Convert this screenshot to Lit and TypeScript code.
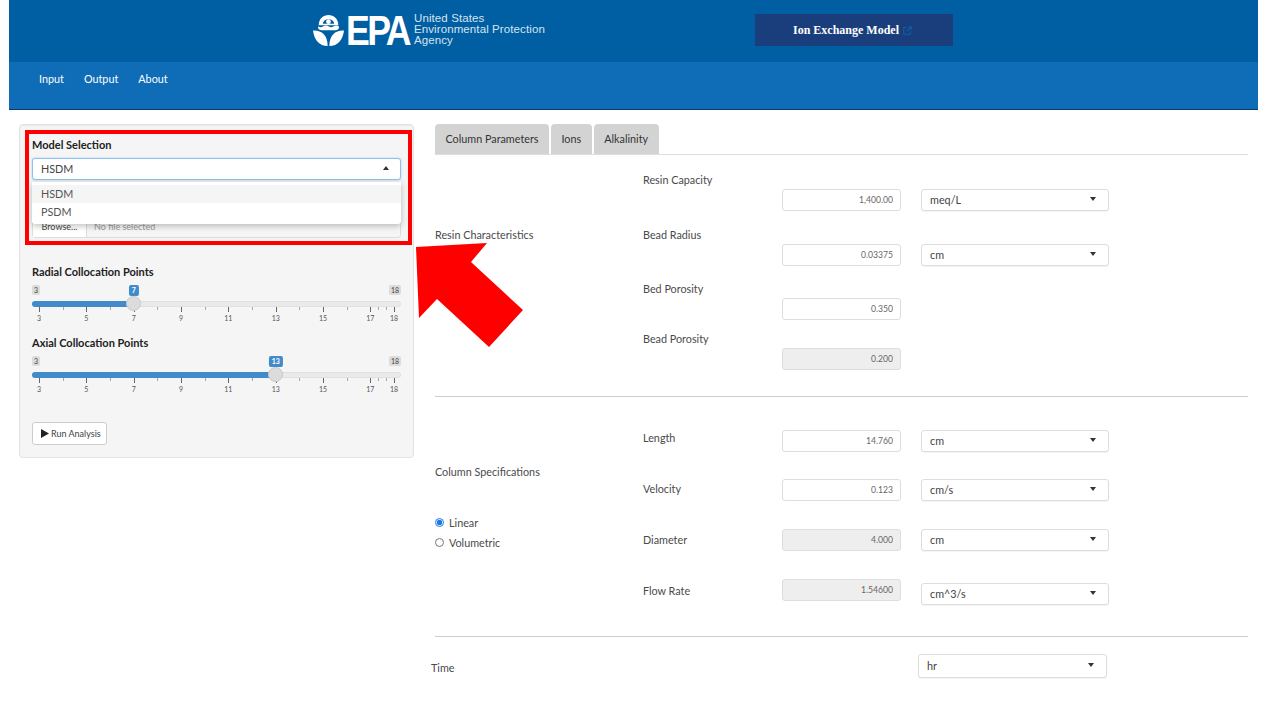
import { html, svg, LitElement, css } from 'lit';
import { customElement, property } from 'lit/decorators.js';

const FONT = css`Lato, 'Noto Sans', sans-serif`;

@customElement('range-slider')
export class RangeSlider extends LitElement {
    @property() label = '';
    @property({ type: Number }) value = 3;

    static styles = css`
  :host {
    display: block;
    font-family: ${FONT};
  }
  .title {
    font-size: 11px;
    font-weight: 700;
    color: #222;
    line-height: 16px;
    margin-bottom: 4px;
  }
  .rail {
    position: relative;
    height: 51px;
  }
  .tag {
    position: absolute;
    top: 1px;
    height: 10px;
    line-height: 10px;
    padding: 0 2px;
    font-size: 7px;
    text-align: center;
    background: #dcdcdc;
    color: #444;
    border-radius: 2px;
  }
  .tag.min { left: 0; }
  .tag.max { right: 0; }
  .tag.now {
    top: 1px;
    height: 11px;
    line-height: 11px;
    padding: 0 3px;
    transform: translateX(-50%);
    background: #428bca;
    color: #fff;
    font-weight: 700;
  }
  .track {
    position: absolute;
    top: 17px;
    left: 0;
    right: 0;
    background: #eaeaea;
    border: 1px solid #e0e0e0;
    box-sizing: content-box;
    height: 4px;
    border-radius: 3px;
  }
  .fill {
    position: absolute;
    top: 17px;
    left: 0;
    height: 6px;
    background: #428bca;
    border-radius: 3px 0 0 3px;
  }
  .knob {
    position: absolute;
    top: 12px;
    width: 15px;
    height: 15px;
    margin-left: -7.5px;
    box-sizing: border-box;
    border-radius: 50%;
    background: #dcdcdc;
    border: 1px solid #c8c8c8;
  }
  .tick {
    position: absolute;
    top: 23px;
    width: 1px;
    height: 3px;
    background: #aaa;
  }
  .tick.major {
    height: 5px;
    background: #666;
  }
  .num {
    position: absolute;
    top: 29px;
    font-size: 7px;
    line-height: 10px;
    color: #555;
    transform: translateX(-50%);
  }
  `;

    private x(v: number) {
        return 7 + (v - 3) * 23.67;
    }

    render() {
        const majors = [3, 5, 7, 9, 11, 13, 15, 17, 18];
        const minors = [4, 6, 8, 10, 12, 14, 16, 17.33, 17.67];
        return html`
    <div class="title">${this.label}</div>
    <div class="rail">
        <span class="tag min">3</span>
        <span class="tag max">18</span>
        <div class="track"></div>
        <div class="fill" style="width:${this.x(this.value)}px"></div>
        ${minors.map((m) => html`<i class="tick" style="left:${this.x(m)}px"></i>`)}
        ${majors.map((m) => html`<i class="tick major" style="left:${this.x(m)}px"></i>
            <span class="num" style="left:${this.x(m)}px">${m}</span>`)}
        <div class="knob" style="left:${this.x(this.value)}px"></div>
        <span class="tag now" style="left:${this.x(this.value)}px">${this.value}</span>
    </div>
    `;
    }
}

interface ParamRow {
    label: string;
    value: string;
    disabled?: boolean;
    unit?: string;
    height: number;
    labelTop?: number;
    inputTop?: number;
    unitTop?: number;
}

const resinRows: ParamRow[] = [
    { label: 'Resin Capacity', value: '1,400.00', unit: 'meq/L', height: 55, inputTop: 17, unitTop: 17 },
    { label: 'Bead Radius', value: '0.03375', unit: 'cm', height: 54, inputTop: 17, unitTop: 17 },
    { label: 'Bed Porosity', value: '0.350', height: 50, inputTop: 17 },
    { label: 'Bead Porosity', value: '0.200', disabled: true, height: 39, inputTop: 17 },
];

const columnRows: ParamRow[] = [
    { label: 'Length', value: '14.760', unit: 'cm', height: 49, labelTop: 0 },
    { label: 'Velocity', value: '0.123', unit: 'cm/s', height: 50, labelTop: 2 },
    { label: 'Diameter', value: '4.000', disabled: true, unit: 'cm', height: 50, labelTop: 3 },
    { label: 'Flow Rate', value: '1.54600', disabled: true, unit: 'cm^3/s', height: 26, labelTop: 4, unitTop: 4 },
];

@customElement('app-root')
export class AppRoot extends LitElement {
    static styles = css`
  :host {
    display: block;
    height: 720px;
    overflow: hidden;
    position: relative;
    background: #fff;
    color: #4a4a4a;
    font-family: ${FONT};
    font-size: 10.8px;
  }
  .page {
    margin-left: 9px;
    width: 1249px;
  }
  .top {
    height: 62px;
    background: #005ea2;
    display: flex;
    align-items: flex-start;
    padding-left: 304px;
    box-sizing: border-box;
  }
  .logo {
    display: flex;
    align-items: center;
    width: 232px;
    margin-top: 14px;
    color: #fff;
  }
  .logo svg {
    width: 31px;
    height: 31px;
    flex: none;
  }
  .wordmark {
    width: 68px;
    margin-left: 2px;
    font: 700 42px/31px 'Liberation Sans', Arial, sans-serif;
    letter-spacing: -3px;
    transform: scaleX(0.85);
    transform-origin: left center;
  }
  .agency {
    font: 11.5px/11px 'Liberation Sans', Arial, sans-serif;
    letter-spacing: 0.1px;
    color: #d6e4f0;
    white-space: nowrap;
    margin-top: -1px;
  }
  .app-title {
    margin-top: 14px;
    margin-left: 210px;
    width: 198px;
    height: 32px;
    display: flex;
    align-items: center;
    gap: 4px;
    padding-left: 38px;
    box-sizing: border-box;
    background: #1a3e7c;
    color: #fff;
    font: 700 12px 'Liberation Serif', serif;
  }
  .app-title svg {
    width: 9px;
    height: 9px;
  }
  .nav {
    background: #0f6cb6;
    border-bottom: 1px solid #12366f;
    display: flex;
    gap: 20px;
    padding: 10px 0 0 30px;
    box-sizing: content-box;
    height: 37px;
    color: #fff;
    line-height: 14px;
  }
  .main {
    display: flex;
    align-items: flex-start;
    padding: 14px 10px 0;
  }
  .well {
    width: 395px;
    height: 334px;
    flex: none;
    box-sizing: border-box;
    padding: 12px;
    background: #f5f5f5;
    border: 1px solid #e3e3e3;
    border-radius: 4px;
    box-shadow: inset 0 1px 1px rgba(0, 0, 0, 0.05);
    position: relative;
  }
  .field-label {
    font-size: 11px;
    font-weight: 700;
    color: #222;
    line-height: 16px;
    margin-bottom: 5px;
  }
  .select {
    height: 22px;
    box-sizing: border-box;
    display: flex;
    align-items: center;
    justify-content: space-between;
    padding: 0 8px 2px;
    background: #fff;
    border: 1px solid #ddd;
    border-radius: 3px;
    color: #444;
    box-shadow: 0 1px 1px rgba(0, 0, 0, 0.05);
  }
  .select.focus {
    border-color: #8fc1ea;
    box-shadow: 0 0 2px rgba(102, 175, 233, 0.6);
    padding-right: 11px;
  }
  .caret {
    width: 0;
    height: 0;
    border: 3px solid transparent;
    border-top: 4px solid #333;
    border-bottom: 0;
    margin-right: 4px;
  }
  .caret.up {
    border-top: 0;
    border-bottom: 4px solid #333;
    margin-right: 0;
  }
  .dropdown {
    position: absolute;
    left: 12px;
    right: 12px;
    top: 57px;
    padding: 3px 0;
    background: #fff;
    border-radius: 0 0 3px 3px;
    box-shadow: 0 2px 6px rgba(0, 0, 0, 0.25);
    z-index: 2;
    color: #555;
  }
  .dropdown div {
    height: 18px;
    line-height: 18px;
    padding-left: 9px;
  }
  .dropdown .hover {
    background: #f5f5f5;
  }
  .file {
    margin-top: 35px;
    height: 23px;
    display: flex;
    box-sizing: border-box;
    border: 1px solid #ddd;
    border-radius: 3px;
    font-size: 9px;
    line-height: 21px;
  }
  .file b {
    font-weight: 400;
    width: 53px;
    flex: none;
    text-align: center;
    background: #fff;
    border-right: 1px solid #ddd;
    color: #444;
  }
  .file span {
    padding-left: 7px;
    color: #999;
  }
  .sliders {
    margin-top: 26px;
  }
  .run {
    margin-top: 16px;
    width: 75px;
    height: 23px;
    box-sizing: border-box;
    display: flex;
    align-items: center;
    gap: 2px;
    padding-left: 8px;
    background: #fff;
    border: 1px solid #ccc;
    border-radius: 3px;
    font-size: 9px;
    color: #444;
    white-space: nowrap;
  }
  .run svg {
    width: 8px;
    height: 9px;
    flex: none;
  }
  .content {
    width: 813px;
    margin-left: 21px;
    flex: none;
  }
  .tabs {
    display: flex;
    gap: 2px;
    height: 30px;
    border-bottom: 1px solid #ddd;
  }
  .tabs span {
    padding: 0 10.5px;
    line-height: 30px;
    background: #d3d3d3;
    border-radius: 4px 4px 0 0;
    color: #333;
  }
  .section {
    display: flex;
  }
  .section.resin {
    margin-top: 17px;
  }
  .side {
    width: 208px;
    flex: none;
  }
  .side-label {
    line-height: 16px;
  }
  .resin .side-label {
    padding-top: 55px;
  }
  .column .side-label {
    padding-top: 34px;
  }
  .radios {
    margin-top: 35px;
    display: flex;
    flex-direction: column;
    gap: 4px;
  }
  .radios label {
    display: flex;
    align-items: center;
    gap: 5px;
    line-height: 16px;
  }
  .radios input {
    width: 9px;
    height: 9px;
    margin: 0 0 2px;
    accent-color: #1f7ae0;
  }
  .rows {
    flex: 1;
  }
  .row {
    display: flex;
    align-items: flex-start;
  }
  .row-label {
    width: 139px;
    line-height: 16px;
    flex: none;
  }
  .num-input {
    width: 119px;
    height: 22px;
    flex: none;
    box-sizing: border-box;
    padding: 0 7px;
    text-align: right;
    font: 8.6px ${FONT};
    color: #666;
    background: #fff;
    border: 1px solid #ddd;
    border-radius: 3px;
    outline: none;
  }
  .num-input:disabled {
    background: #eee;
    color: #666;
  }
  .unit {
    width: 188px;
    margin-left: 20px;
    flex: none;
  }
  .rule {
    border: 0;
    border-top: 1px solid #ccc;
    margin: 26px 0 33px;
  }
  .rule.low {
    margin: 31px 0 17px;
  }
  .time {
    display: flex;
    align-items: flex-start;
    margin-left: -4px;
  }
  .time .row-label {
    width: 487px;
    padding-top: 6px;
  }
  .time .select {
    width: 189px;
    height: 24px;
  }
  .callout {
    position: absolute;
    left: 25px;
    top: 130px;
    width: 387px;
    height: 115px;
    box-sizing: border-box;
    border: 4px solid #f00;
    z-index: 3;
    pointer-events: none;
  }
  .arrow {
    position: absolute;
    left: 410px;
    top: 240px;
    width: 120px;
    height: 110px;
    z-index: 3;
  }
  `;

    private renderRow(r: ParamRow) {
        return html`
        <div class="row" style="height:${r.height}px">
            <div class="row-label" style="margin-top:${r.labelTop ?? 0}px">${r.label}</div>
            <input class="num-input" style="margin-top:${r.inputTop ?? 0}px" .value=${r.value} ?disabled=${r.disabled}>
            ${r.unit ? html`
            <div class="select unit" style="margin-top:${r.unitTop ?? r.inputTop ?? 0}px">
                ${r.unit}<i class="caret"></i>
            </div>` : ''}
        </div>`;
    }

    render() {
        return html`
    <div class="page">
        <div class="top">
            <div class="logo">
                <svg viewBox="0 0 30 30" fill="#fff">
                    <path d="M5.5 10 C5.5 3.5 10 0 15 0 C20 0 24.500 3.500 24.500 10 Z"/>
                    <path d="M9.500 8.500 a5.500 4.500 0 0 1 11 0 Z" fill="#005ea2"/>
                    <circle cx="15" cy="6.500" r="2.300"/>
                    <path d="M5 11 q2.500 1.800 5 0 t5 0 t5 0 t5 0 v2 q-1 1.500 -3 1.800 H8 q-2 -.3 -3 -1.800 Z"/>
                    <path d="M0 15 C8 14.500 14 19 14.200 30 C6 30 1 24 0 15 Z"/>
                    <path d="M30 15 C22 14.500 16 19 15.800 30 C24 30 29 24 30 15 Z"/>
                </svg>
                <div class="wordmark">EPA</div>
                <div class="agency">United States<br>Environmental Protection<br>Agency</div>
            </div>
            <div class="app-title">
                Ion Exchange Model
                <svg viewBox="0 0 12 12" fill="none" stroke="#0a5fa5" stroke-width="1.500">
                    <path d="M5 2 H1 V11 H10 V7 M7 1 H11 V5 M11 1 L5 7"/>
                </svg>
            </div>
        </div>
        <nav class="nav">
            <span>Input</span>
            <span>Output</span>
            <span>About</span>
        </nav>
        <div class="main">
            <aside class="well">
                <div class="field-label">Model Selection</div>
                <div class="select focus">HSDM<i class="caret up"></i></div>
                <div class="dropdown">
                    <div class="hover">HSDM</div>
                    <div>PSDM</div>
                </div>
                <div class="file"><b>Browse...</b><span>No file selected</span></div>
                <div class="sliders">
                    <range-slider label="Radial Collocation Points" .value=${7}></range-slider>
                    <range-slider label="Axial Collocation Points" .value=${13}></range-slider>
                </div>
                <div class="run">
                    <svg viewBox="0 0 8 9" fill="#222"><path d="M0 0 L8 4.500 L0 9 Z"/></svg>
                    Run Analysis
                </div>
            </aside>
            <section class="content">
                <div class="tabs">
                    <span>Column Parameters</span>
                    <span>Ions</span>
                    <span>Alkalinity</span>
                </div>
                <div class="section resin">
                    <div class="side"><div class="side-label">Resin Characteristics</div></div>
                    <div class="rows">${resinRows.map((r) => this.renderRow(r))}</div>
                </div>
                <hr class="rule">
                <div class="section column">
                    <div class="side">
                        <div class="side-label">Column Specifications</div>
                        <div class="radios">
                            <label><input type="radio" name="mode" checked>Linear</label>
                            <label><input type="radio" name="mode">Volumetric</label>
                        </div>
                    </div>
                    <div class="rows">${columnRows.map((r) => this.renderRow(r))}</div>
                </div>
                <hr class="rule low">
                <div class="time">
                    <div class="row-label">Time</div>
                    <div class="select">hr<i class="caret"></i></div>
                </div>
            </section>
        </div>
    </div>
    <div class="callout"></div>
    <svg class="arrow" viewBox="410 240 120 110">
        ${svg`<polygon fill="#f00" points="416,247 487,243 471,262 523,310 489,347 437,299 419,318"></polygon>`}
    </svg>
    `;
    }
}

declare global {
    interface HTMLElementTagNameMap {
        'app-root': AppRoot;
        'range-slider': RangeSlider;
    }
}
